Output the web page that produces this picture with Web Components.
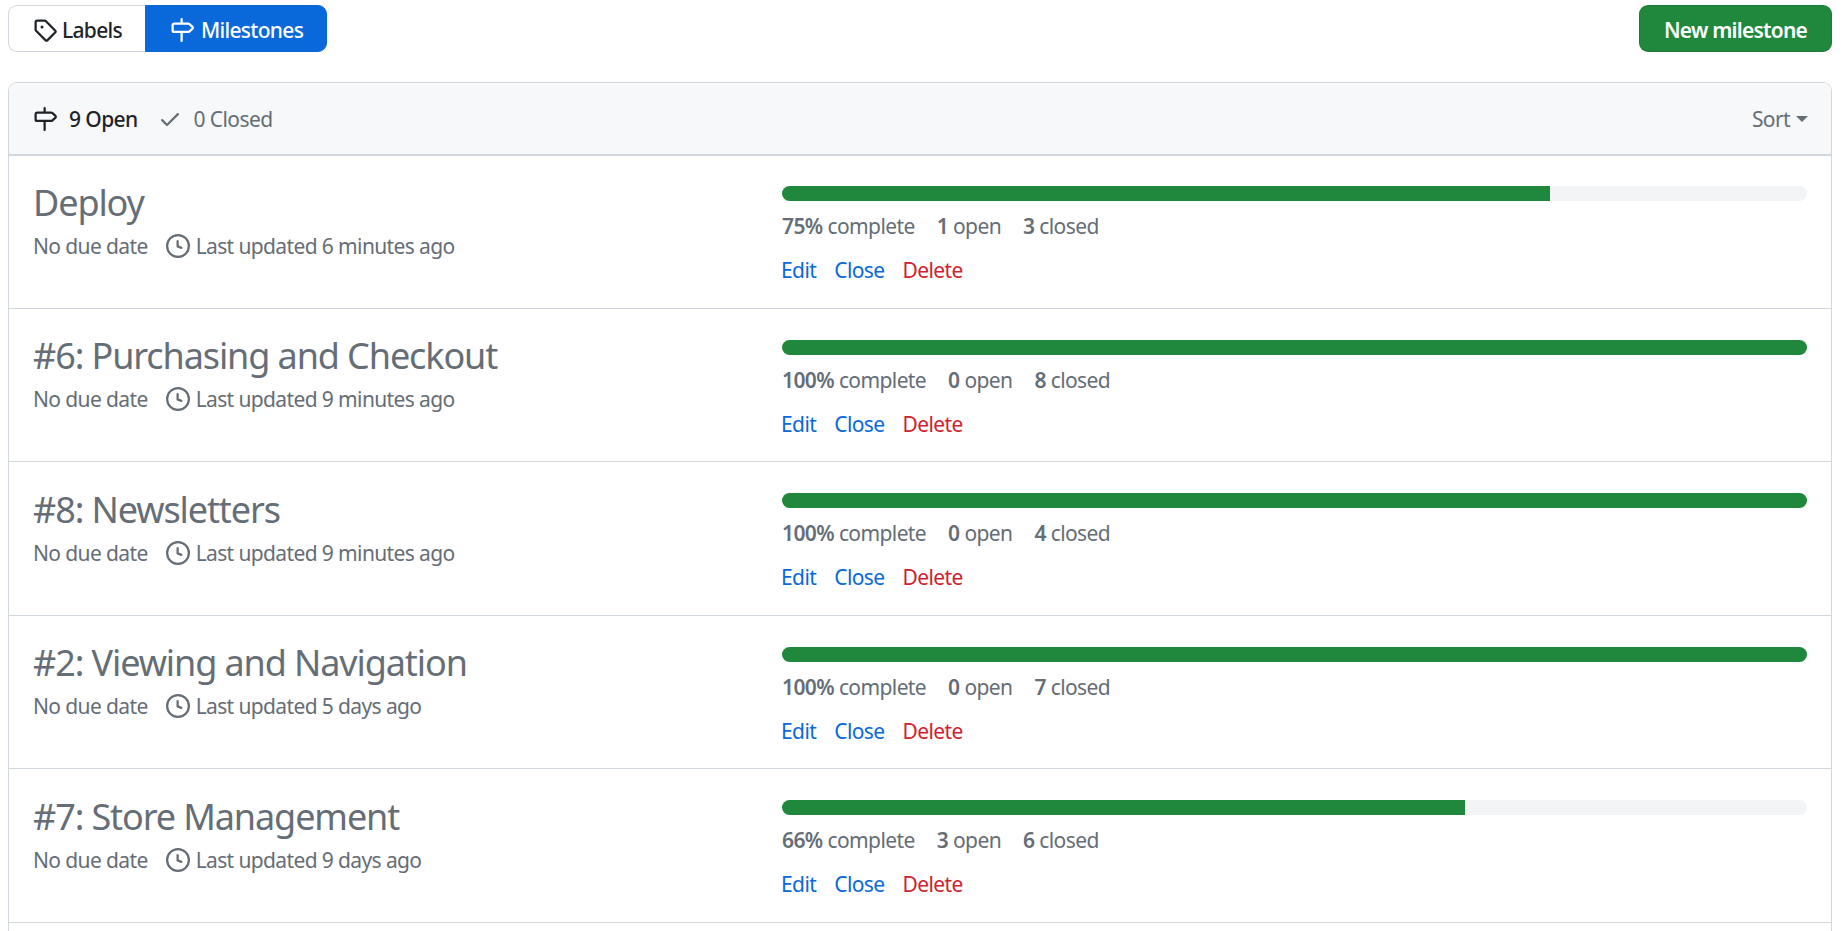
<!DOCTYPE html>
<html><head><meta charset="utf-8">
<style>
html,body{margin:0;height:931px;overflow:hidden;background:#fff}
body{font-family:"Noto Sans","Open Sans",sans-serif;color:#1f2328;font-size:21px}
</style></head><body>
<ms-page>
  <ms-toolbar>
    <ms-tabs>
      <ms-tab icon="tag">Labels</ms-tab>
      <ms-tab icon="milestone" selected>Milestones</ms-tab>
    </ms-tabs>
    <ms-button>New milestone</ms-button>
  </ms-toolbar>
  <ms-box>
    <ms-row title="Deploy" updated="Last updated 6 minutes ago" pct="75" fill="74.9" open="1" closed="3"></ms-row>
    <ms-row title="#6: Purchasing and Checkout" updated="Last updated 9 minutes ago" pct="100" fill="100" open="0" closed="8"></ms-row>
    <ms-row title="#8: Newsletters" updated="Last updated 9 minutes ago" pct="100" fill="100" open="0" closed="4"></ms-row>
    <ms-row title="#2: Viewing and Navigation" updated="Last updated 5 days ago" pct="100" fill="100" open="0" closed="7"></ms-row>
    <ms-row title="#7: Store Management" updated="Last updated 9 days ago" pct="66" fill="66.6" open="3" closed="6"></ms-row>
  </ms-box>
</ms-page>
<script>
const ICONS={
tag:'M1 7.775V2.75C1 1.784 1.784 1 2.75 1h5.025c.464 0 .91.184 1.238.513l6.25 6.25a1.75 1.75 0 0 1 0 2.474l-5.026 5.026a1.75 1.75 0 0 1-2.474 0l-6.25-6.25A1.752 1.752 0 0 1 1 7.775Zm1.5 0c0 .066.026.13.073.177l6.25 6.25a.25.25 0 0 0 .354 0l5.025-5.025a.25.25 0 0 0 0-.354l-6.25-6.25a.25.25 0 0 0-.177-.073H2.75a.25.25 0 0 0-.25.25ZM6 5a1 1 0 1 1 0 2 1 1 0 0 1 0-2Z',
milestone:'M7.75 0a.75.75 0 0 1 .75.75V3h3.634c.414 0 .814.147 1.13.414l2.07 1.75a1.75 1.75 0 0 1 0 2.672l-2.07 1.75a1.75 1.75 0 0 1-1.13.414H8.5v5.25a.75.75 0 0 1-1.5 0V10H2.75A1.75 1.75 0 0 1 1 8.25v-3.5C1 3.784 1.784 3 2.75 3H7V.75A.75.75 0 0 1 7.75 0Zm4.384 8.5a.25.25 0 0 0 .161-.06l2.07-1.75a.248.248 0 0 0 0-.38l-2.07-1.75a.25.25 0 0 0-.161-.06H2.75a.25.25 0 0 0-.25.25v3.5c0 .138.112.25.25.25h9.384Z',
check:'M13.78 4.22a.75.75 0 0 1 0 1.06l-7.25 7.25a.75.75 0 0 1-1.06 0L2.22 9.28a.751.751 0 0 1 .018-1.042.751.751 0 0 1 1.042-.018L6 10.94l6.72-6.72a.75.75 0 0 1 1.06 0Z',
clock:'M8 0a8 8 0 1 1 0 16A8 8 0 0 1 8 0ZM1.5 8a6.5 6.5 0 1 0 13 0 6.5 6.5 0 0 0-13 0Zm7-3.25v2.992l2.028.812a.75.75 0 0 1-.557 1.392l-2.5-1A.751.751 0 0 1 7 8.25v-3.5a.75.75 0 0 1 1.5 0Z'};
const LS='-.6px';
function el(name,css,html){
  customElements.define(name,class extends HTMLElement{
    constructor(){super();this.attachShadow({mode:'open'})}
    connectedCallback(){
      const h=typeof html==='function'?html(this):html;
      this.shadowRoot.innerHTML='<style>'+css+'</style>'+h;
    }
  });
}
el('ms-icon',':host{display:inline-flex;flex:none;line-height:0}svg{fill:currentColor;display:block}',
  e=>{const s=e.getAttribute('size')||24;return `<svg width="${s}" height="${s}" viewBox="0 0 16 16"><path d="${ICONS[e.getAttribute('name')]}"/></svg>`});
el('ms-page',':host{display:block;padding:5px 11px 0 8px}','<slot></slot>');
el('ms-toolbar',':host{display:flex;justify-content:space-between;align-items:flex-start;margin-bottom:30px}','<slot></slot>');
el('ms-tabs',':host{display:inline-flex;height:47px}::slotted(ms-tab:first-child){border-radius:9px 0 0 9px;border-right:0}::slotted(ms-tab:last-child){border-radius:0 9px 9px 0}','<slot></slot>');
el('ms-tab',`:host{display:flex;align-items:center;box-sizing:border-box;border:1px solid #d0d7de;font-size:21px;font-weight:500;letter-spacing:-.7px;color:#1f2328;background:#fff;padding:2px 23px 0 24px;gap:5px}
:host([selected]){background:#0969da;border-color:#0969da;color:#fff;padding:2px 23px 0 24px;gap:7px}`,
  e=>`<ms-icon name="${e.getAttribute('icon')}"></ms-icon><span><slot></slot></span>`);
el('ms-button',`:host{display:flex;align-items:center;box-sizing:border-box;height:47px;width:193px;padding-top:2px;justify-content:center;border-radius:9px;background:#1f883d;border:1px solid rgba(31,35,40,.15);color:#fff;font-size:21px;font-weight:600;letter-spacing:-.78px}`,'<slot></slot>');
el('ms-box',`:host{display:block;height:900px;box-sizing:border-box;border:1px solid #d0d7de;border-radius:9px;overflow:hidden;color:#656d76;letter-spacing:${LS}}
header{display:flex;align-items:center;box-sizing:border-box;height:73px;margin-bottom:-1px;position:relative;background:#f6f8fa;border-bottom:2px solid #d0d7de;padding:1px 23px 0 24px}
.open{display:flex;align-items:center;gap:12px;color:#1f2328;font-weight:500}
.closed{display:flex;align-items:center;gap:12px;margin-left:20px}
.sort{margin-left:auto;display:flex;align-items:center;gap:6px}
.caret{width:0;height:0;border:6px solid transparent;border-top-color:currentColor;border-bottom:0}`,
`<header><span class="open"><ms-icon name="milestone"></ms-icon>9 Open</span><span class="closed"><ms-icon name="check"></ms-icon>0 Closed</span><span class="sort">Sort<i class="caret"></i></span></header><slot></slot>`);
el('ms-row',`:host{display:grid;grid-template-columns:749px 1fr;box-sizing:border-box;height:153.6px;border-bottom:1px solid #d0d7de;padding:0 24px 0 24px}
.l{padding-top:24.5px}
h2{margin:0;font-size:36px;font-weight:400;line-height:45px;letter-spacing:-1.1px}
.meta{display:flex;align-items:center;line-height:30px;margin-top:6px;letter-spacing:-.62px}
.meta ms-icon{margin:0 6px 0 18px}
.r{padding-top:31px}
.bar{height:15px;border-radius:8px;background:#f3f4f6;overflow:hidden}
.bar i{display:block;height:100%;background:#1f883d}
.stats{display:flex;gap:22px;line-height:30px;margin-top:10px}
b{font-weight:600}
.acts{display:flex;gap:18px;line-height:30px;margin:14px 0 0 -1px}
a{color:#0969da}a.d{color:#cf222e}`,
e=>{const g=k=>e.getAttribute(k);return `<div class="l"><h2>${g('title')}</h2><div class="meta">No due date<ms-icon name="clock"></ms-icon>${g('updated')}</div></div>
<div class="r"><div class="bar"><i style="width:${g('fill')}%"></i></div>
<div class="stats"><span><b>${g('pct')}%</b> complete</span><span><b>${g('open')}</b> open</span><span><b>${g('closed')}</b> closed</span></div>
<div class="acts"><a>Edit</a><a>Close</a><a class="d">Delete</a></div></div>`});
</script>
</body></html>
